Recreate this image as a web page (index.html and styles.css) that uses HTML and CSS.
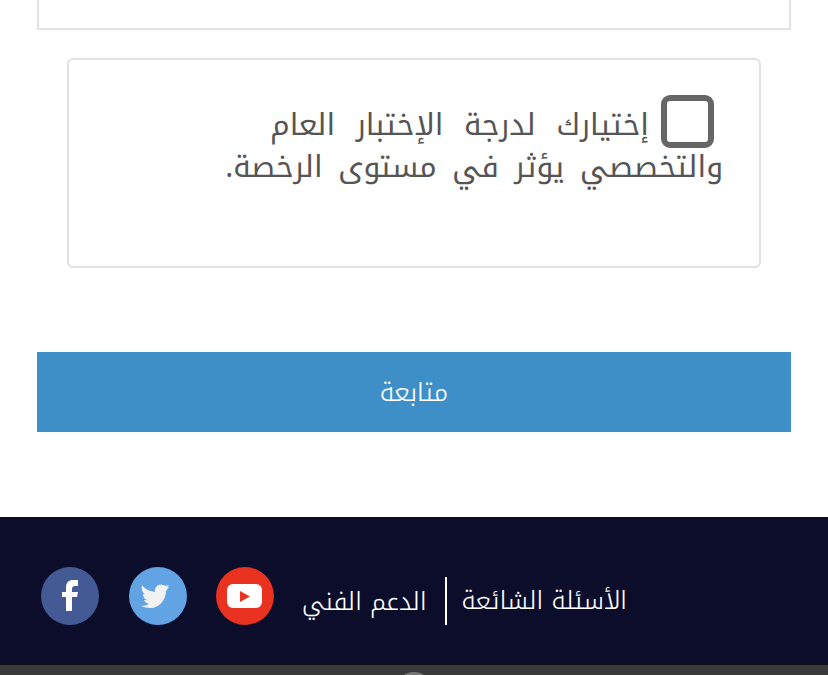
FILE: index.html
```html
<!DOCTYPE html>
<html lang="ar" dir="rtl">
<head>
<meta charset="utf-8">
<title>متابعة</title>
<link rel="stylesheet" href="styles.css">
</head>
<body>
<main class="content">
  <div class="top-box"></div>
  <label class="notice">
    <span class="check"></span><span class="line-first">إختيارك لدرجة الإختبار العام</span><br>والتخصصي يؤثر في مستوى الرخصة.
  </label>
  <button class="continue" type="button">متابعة</button>
</main>
<footer class="footer">
  <nav class="links">
    <a class="link first">الأسئلة الشائعة</a>
    <a class="link">الدعم الفني</a>
  </nav>
  <div class="social">
    <svg class="icon" viewBox="0 0 58 58"><circle cx="29" cy="29" r="29" fill="#e9321f"/><rect x="11" y="17" width="35" height="24" rx="6" fill="#fff"/><path d="M24 24l10 5.500-10 5.500z" fill="#e9321f"/></svg>
    <svg class="icon" viewBox="0 0 58 58"><circle cx="29" cy="29" r="29" fill="#62a3e4"/><path d="M13 18c3 4 7 6 13 7-1-5 4-9 8-7 2 1 3 1 6 0-1 2-2 3-3 3l3-1-3 4c0 9-7 17-15 17-4 0-7-1-10-2 3 0 6-1 8-2-3-1-4-2-5-4h3c-3-1-4-3-4-6l2 1c-3-3-4-7-3-10z" fill="#f2f2f2"/></svg>
    <svg class="icon" viewBox="0 0 58 58"><circle cx="29" cy="29" r="29" fill="#445a94"/><path d="M25 44V30h-4v-5h4v-4c0-6 3-8 7-8h5v6h-3c-2 0-3 1-3 3v3h6l-1 5h-5v14z" fill="#fff"/></svg>
  </div>
</footer>
<div class="bottom-bar"><span class="bar-dot"></span></div>
</body>
</html>
```

FILE: styles.css
```css
html, body {
  margin: 0;
  padding: 0;
  background: #fff;
  overflow: hidden;
}
body {
  height: 675px;
  font-family: "Noto Kufi Arabic", "DejaVu Sans", sans-serif;
}
.content {
  height: 517px;
  padding: 0 37px;
  box-sizing: border-box;
  display: flex;
  flex-direction: column;
}
.top-box {
  height: 30px;
  box-sizing: border-box;
  border: 2px solid #e2e2e4;
  border-top: 0;
}
.notice {
  margin: 28px 30px 0;
  height: 210px;
  box-sizing: border-box;
  border: 2px solid #e2e2e4;
  border-radius: 6px;
  padding: 35px 36px 0 30px;
  color: #555;
  font-size: 30px;
  line-height: 39px;
  word-spacing: 5.500px;
  display: block;
}
.line-first {
  word-spacing: 10.500px;
}
.check {
  display: inline-block;
  width: 53px;
  height: 53px;
  box-sizing: border-box;
  border: 6px solid #666;
  border-radius: 9px;
  margin-right: 9px;
  margin-left: 12px;
  vertical-align: -13px;
}
.continue {
  margin-top: 84px;
  height: 80px;
  border: 0;
  background: #3e8ec8;
  color: #fff;
  font-family: inherit;
  font-size: 25.500px;
  font-weight: 300;
  padding: 0;
}
.footer {
  height: 147px;
  background: #0c0d2b;
  box-sizing: border-box;
  display: flex;
  align-items: flex-start;
  padding: 50px 201px 0 41px;
  justify-content: space-between;
}
.links {
  display: flex;
  align-items: center;
  height: 48px;
  margin-top: 10px;
  color: #fff;
  font-size: 24.800px;
  font-weight: 300;
}
.link.first {
  padding-left: 15px;
  border-left: 2px solid #fff;
  height: 48px;
  line-height: 48px;
  margin-left: 18px;
}
.social {
  display: flex;
  gap: 29.500px;
}
.icon {
  width: 58px;
  height: 58px;
}
.bottom-bar {
  height: 11px;
  background: #3a3a3a;
  position: relative;
  overflow: hidden;
  border-top: 1px solid #111;
  box-sizing: border-box;
}
.bar-dot {
  position: absolute;
  left: 396px;
  top: 7px;
  width: 36px;
  height: 36px;
  border-radius: 50%;
  background: #777;
}
```
